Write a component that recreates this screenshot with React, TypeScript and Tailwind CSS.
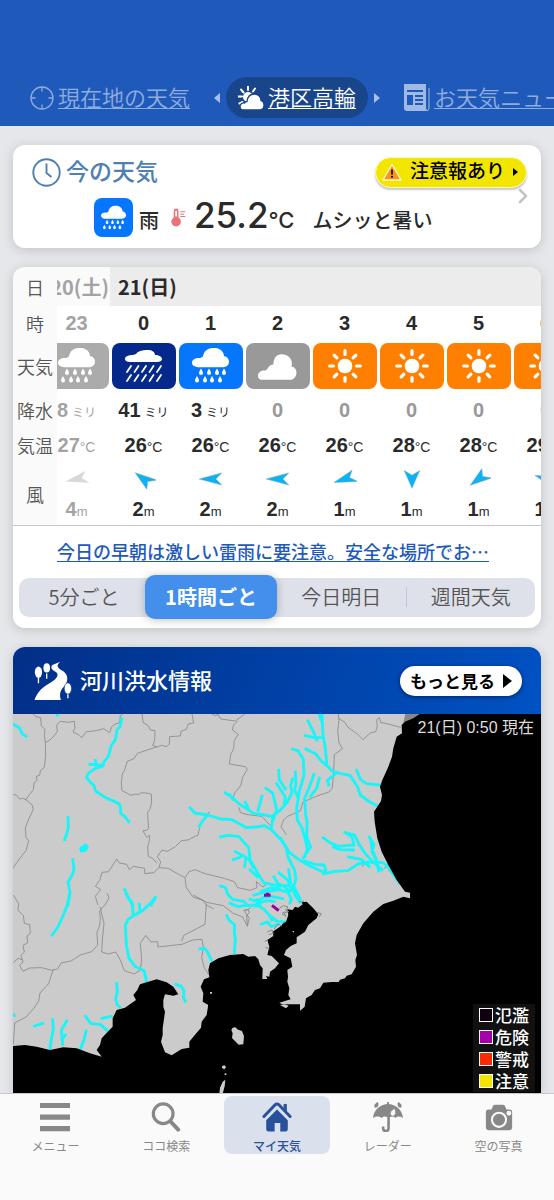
import React from "react";
import { ChevronRight } from "lucide-react";

type Sky = "rain" | "storm" | "cloud" | "sun";

interface Hour {
  time: string;
  sky: Sky;
  rain: number;
  temp: number;
  angle: number;
  wind: number;
  past?: boolean;
}

const hours: Hour[] = [
  { time: "23", sky: "rain", rain: 8, temp: 27, angle: 75, wind: 4, past: true },
  { time: "0", sky: "storm", rain: 41, temp: 26, angle: 132, wind: 2 },
  { time: "1", sky: "rain", rain: 3, temp: 26, angle: 90, wind: 2 },
  { time: "2", sky: "cloud", rain: 0, temp: 26, angle: 90, wind: 2 },
  { time: "3", sky: "sun", rain: 0, temp: 26, angle: 68, wind: 1 },
  { time: "4", sky: "sun", rain: 0, temp: 28, angle: 0, wind: 1 },
  { time: "5", sky: "sun", rain: 0, temp: 28, angle: 48, wind: 1 },
  { time: "6", sky: "sun", rain: 0, temp: 29, angle: 112, wind: 1 },
];

const CLOUD = "M8 22C3 22 0 20 0 17c0-3 3-5 7-5 2 0 3-1 4-2C12 4 16 1 22 1c6 0 10 4 10 9 3 0 5 3 5 6 0 4-3 6-7 6Z";
const DROP = "M0 0c1 2 2 3 2 4.500a2 2 0 0 1-4 0C-2 3-1 2 0 0Z";

function Rain({ className }: { className: string }) {
  return (
    <svg viewBox="0 -2 37 36" className={className} fill="#fff" aria-hidden="true">
      <path transform="translate(0 -3) scale(1 .92)" d={CLOUD} />
      {[9, 17, 25, 32].map((x) => (
        <path key={x} transform={`translate(${x} 18.500)`} d={DROP} />
      ))}
      {[5, 13, 20, 28].map((x) => (
        <path key={x} transform={`translate(${x} 26)`} d={DROP} />
      ))}
    </svg>
  );
}

function SkyIcon({ sky }: { sky: Sky }) {
  if (sky === "rain") return <Rain className="h-[36px] w-[37px]" />;
  if (sky === "storm")
    return (
      <svg viewBox="0 0 38 36" className="h-[36px] w-[38px]" fill="#fff" aria-hidden="true">
        <path d="M5 14c-3 0-5-1-5-3 0-3 4-4 8-4 1 0 2-1 3-1 2-3 6-4 12-4 4 0 7 2 7 5 4 0 7 2 7 4 0 2-2 3-5 3Z" />
        <path
          d="M6 18l-4 6M13.500 18l-4 6M21 18l-4 6M28.500 18l-4 6M36 18l-4 6M6 27l-4 6M13.500 27l-4 6M21 27l-4 6M28.500 27l-4 6M36 27l-4 6"
          stroke="#fff"
          strokeWidth="1.800"
          strokeLinecap="round"
        />
      </svg>
    );
  if (sky === "cloud")
    return (
      <svg viewBox="0 0 38 26" className="h-[27px] w-[39px]" fill="#fff" aria-hidden="true">
        <path d="M4 26c-3 0-4-2-4-4 0-3 3-5 6-5 2 0 3-1 4-3 1-2 3-3 5-3C15 5 18 1 23 1c6 0 10 4 10 9 0 1 0 2-.5 3 3 0 5 3 5 6 0 4-3 7-7 7Z" />
      </svg>
    );
  return (
    <svg viewBox="-18 -18 36 36" className="size-[36px]" aria-hidden="true">
      <circle r="7.300" fill="#fff" />
      {[0, 45, 90, 135, 180, 225, 270, 315].map((a) => (
        <path key={a} d="M0 -11.500V-15.300" transform={`rotate(${a})`} stroke="#fff" strokeWidth="3.200" strokeLinecap="round" />
      ))}
    </svg>
  );
}

function tileColor(h: Hour) {
  if (h.past) return "bg-[#ababab]";
  return {
    rain: "bg-[#0677fd]",
    storm: "bg-[#05298a]",
    cloud: "bg-[#999999]",
    sun: "bg-[#ff8000]",
  }[h.sky];
}

function WindArrow({ angle, past }: { angle: number; past?: boolean }) {
  return (
    <svg viewBox="-12 -12 24 24" className="size-[24px]" aria-hidden="true">
      <path
        transform={`scale(1.080 .850) rotate(${angle})`}
        d="M0 11L-7.200-10L0-4.500L7.200-10Z"
        fill={past ? "#d8d8d8" : "#0cb2f2"}
        stroke={past ? "none" : "#7aa7bd"}
        strokeWidth=".5"
      />
    </svg>
  );
}

const rowLabel =
  "relative z-10 bg-[#fafafa] text-[18px] leading-6 font-[350] text-[#555] shadow-[3px_0_3px_-1px_rgba(0,0,0,0.18)]";

function HourCell({ index, children }: { index: number; children: React.ReactNode }) {
  return (
    <td className="overflow-hidden p-0">
      <div className={index === 0 ? "-ml-[14px] flex w-[67px] flex-col items-center" : "flex w-[67px] flex-col items-center"}>
        {children}
      </div>
    </td>
  );
}

const num = "font-['Liberation_Sans'] text-[20px] font-bold leading-6";

function Forecast() {
  const tone = (h: Hour) => (h.past ? "text-[#a3a3a3]" : "text-[#2a2a2a]");
  return (
    <div className="overflow-hidden rounded-t-xl border-b border-[#c8c8cc]">
      <table className="w-[566px] table-fixed border-collapse">
        <colgroup>
          <col className="w-[44px]" />
          <col className="w-[53px]" />
          {hours.slice(1).map((h) => (
            <col key={h.time} className="w-[67px]" />
          ))}
        </colgroup>
        <tbody>
          <tr className="h-[39px]">
            <th scope="row" className={rowLabel}>日</th>
            <td className="overflow-hidden bg-[#fafafa] p-0">
              <div className="-ml-[14px] flex w-[66px] justify-end whitespace-nowrap text-[20px] font-bold text-[#a3a3a3]">20(土)</div>
            </td>
            <td colSpan={7} className="bg-[#ececec] p-0 pl-2 text-[20px] font-bold text-[#2a2a2a]">21(日)</td>
          </tr>
          <tr className="h-[34px]">
            <th scope="row" className={rowLabel}>時</th>
            {hours.map((h, i) => (
              <HourCell key={h.time} index={i}>
                <span className={`${num} ${tone(h)}`}>{h.time}</span>
              </HourCell>
            ))}
          </tr>
          <tr className="h-[52px]">
            <th scope="row" className={rowLabel}>天気</th>
            {hours.map((h, i) => (
              <HourCell key={h.time} index={i}>
                <div className={`flex h-[46px] w-[64px] items-center justify-center rounded-lg ${tileColor(h)}`}>
                  <SkyIcon sky={h.sky} />
                </div>
              </HourCell>
            ))}
          </tr>
          <tr className="h-[35px]">
            <th scope="row" className={rowLabel}>降水</th>
            {hours.map((h, i) => (
              <HourCell key={h.time} index={i}>
                {h.rain > 0 ? (
                  <span className={`flex items-baseline gap-1 whitespace-nowrap ${tone(h)}`}>
                    <span className={num}>{h.rain}</span>
                    <span className="text-[12px] font-normal leading-4">ミリ</span>
                  </span>
                ) : (
                  <span className={`${num} text-[#999]`}>0</span>
                )}
              </HourCell>
            ))}
          </tr>
          <tr className="h-[36px]">
            <th scope="row" className={rowLabel}>気温</th>
            {hours.map((h, i) => (
              <HourCell key={h.time} index={i}>
                <span className={`flex items-baseline ${tone(h)}`}>
                  <span className={num}>{h.temp}</span>
                  <span className="font-['Liberation_Sans'] text-[14px] leading-4">°C</span>
                </span>
              </HourCell>
            ))}
          </tr>
          <tr className="h-[62px]">
            <th scope="row" className={rowLabel}>風</th>
            {hours.map((h, i) => (
              <HourCell key={h.time} index={i}>
                <WindArrow angle={h.angle} past={h.past} />
                <span className={`mt-1.5 flex items-baseline ${tone(h)}`}>
                  <span className={num}>{h.wind}</span>
                  <span className="font-['Liberation_Sans'] text-[13px] leading-4">m</span>
                </span>
              </HourCell>
            ))}
          </tr>
        </tbody>
      </table>
    </div>
  );
}

function FloodMap() {
  return (
    <svg viewBox="13 714 528 379" className="block w-full bg-[#cbcbcb]" role="img" aria-label="河川洪水情報の地図">
      {/* Prefecture borders */}
      <g fill="none" stroke="#8b8b8b" strokeWidth="2.600" strokeLinejoin="round">
        <g transform="translate(0 705) scale(.33333)">
          <path d="M100 27l8 8 14 3 2 25 11 10-2 20 3 18 1 40-4 36-12 10-2 14-10 3 2 12-9 8-2 20-14 18-8 12-10-4-10 2-8-11-10-3" />
          <path d="M136 113l14-8 12-12 10-14-2-18 10-12 25 3 18-3 2 20-6 12 16 8 10 9 14-18 30-3 22-6 18 12 6-18 10-8 14-3 2-22 8-6" />
          <path d="M426 27l4 26 16 10 5 12 14 2-1 30-6 14 14 5 12-5 16 4 8-8 1-22 32-2 2-14 16-6 6-16 16-3-3-16-2-11" />
          <path d="M472 125l-30 10-30 10-10 16-20 8-8 26-7 12-3 28 2 22 16 8 10 6 16-4 6 2 10-6 22 2 8 3 1 26-6 20-6 8 1 26 2 22-5 5-12 3 12 20 8-8-2 22-4 14 2 28 14 7 12 14" />
          <path d="M472 455l14-20 16 4 24-14 18-18 20-2 30-15 6-28 28-42" />
          <path d="M472 455l10 16-5 16-15 16-28 3v-16l-34-6-12 10-8-16-22-4-8-12-24 38-20 2-6 22-14 20 16 10-16 20 8 26" />
          <path d="M477 488l28 2 20 12 30 16 12-18 18-6 30 12 58 14 30 10 10 18 38 8 20-8-2-18 20 16 16-12" />
          <path d="M555 518l4 30 20 28 30 10 10 14 22 12" />
          <path d="M636 27l10 5 8-4 8 14 44 6 28-21M713 48l-12 12-4 14 18 14-12 18-2 25-9 18-4 28 48 8 6 8-14 24-6 25-18 22-6 18M716 307l6 16 22 6 18 2 24 3 14 16 12 12" />
          <path d="M76 283l20 16 4 14-16 34-8 22 2 28 8 10-8 30-20 25-20 28" />
          <path d="M1015 25l2 22-4 30 4 36 10 18-24 18-2 50-4 50-10 12-36 12-42 18-8 26-40 18-10 10-8 20 16 24" />
          <path d="M1015 40l20 12 8 14 30 22 16 16 22-20 16-4 5-18-2-18 8-6 4 14 22 5 38 10" />
        </g>
        <g transform="translate(0 895) scale(.33333)">
          <path d="M40 0l16 26-2 20 16 15 3 24 16 4 2 26-10 8 2 20-14 8 4 20-10 10 6 20-10 10 10 18 20-10 36-1 30 8 18-4 10-18 30-6 28-18 34-10 18-20-2-38 8-22 2-18-2-24 20-24 8-16-6-14" />
          <path d="M40 203l14-13 12 4M160 222l-14 44-26 28-4 24-16 24-22 24-34 18-4 65M300 35l12 50-5 50-2 36 20 6 22-6 14 24 12 32 30 10 18-12 4-30-4-50 16-24 16 20 20-1 1 16 72-8 32-13 28-2 4 24-5 30 8 32 12 18 28 2" />
          <path d="M545 139l6-18 26-13 38-20 4-62M580 0l40 22 50 10 28 22 30 12 14 28 6-24-14-20 18-12" />
        </g>
        <g transform="translate(180 705) scale(.33333)">
          <path d="M545 486l14-14 6 12M612 490l18-10M622 475l6 25" />
        </g>
      </g>

      {/* Rivers */}
      <g fill="none" stroke="#18f5f8" strokeWidth="8.500" strokeLinecap="square" strokeLinejoin="round">
        <g transform="translate(0 705) scale(.33333)">
          <path d="M40 58l18 10 10 20 10 6M365 42l-4 22-10 10-4 28-14 22-8 30-12 15-6 15-18 5-22 14-8 14 12 15 10 8 6 18 30 20 40 18 5 12v18l12 8 12 16M270 178l40 2M286 166l4 20M204 338l1 28-6 24-5 14M218 464l4 24-4 20-14 24 6 30-6 38" />
          <path d="M242 430l14-10 6 6-6 10-12 2Z" fill="#18f5f8" />
          <path d="M374 554l10 22 14 24M466 578l-12 22M172 28v2" />
        </g>
        <g transform="translate(0 895) scale(.33333)">
          <path d="M208 0l-6 30-12 30-16 36-18 24M380 0l16 24 4 38-16 12-8 16 3 60 8 40 18 24 28 14 6 30M466 8l-18 20-22 20-22 12M418 28l2 20" />
          <path d="M350 266l2 24-5 20 4 18 8 8M158 374l2 28-5 26-5 32M200 378l-16 28 4 42M196 420l-10 14M258 408l-6 26-10 26M104 393l24-8M257 364l16 22 28 2 22 20M306 370l28-6M528 268l16 6 8 14-2 20 6 10M42 360v2" />
          <path d="M680 62l8 14 16 14-1 22 3 20-3 40M600 162l14-2 8 10 12 26" />
        </g>
        <g transform="translate(180 705) scale(.33333)">
          <path d="M30 308l14 16 38 6 40 12 34 2 44 24 30-2 24-4 22 14 30 32 22 34 26 20 30 18 54 25 26-6 40-2 30-20 36-6 40 2 22 24 26 36 34 18M82 330l-16 20-8 14M136 264l20 12 20 20 26 16 20 14 32 4 20 4 26-18 20-22 16-30-4-22 6-20M150 270l8 12M196 292l8 16M296 196l2 28 18 28M290 236l26 40-4 26M258 250l20 14 12 50-10 30M246 274l-12 42M278 340l-4 30" />
          <path d="M338 132l16 5 16 26 2 48-14 48-8 50 2 36 14 24 10 35 6 26-8 24M346 202l2 34-4 18 8 20M402 208l-14 38-14 34 3 50 4 20-1 46 12 30-10 14-12 18M418 220l-8 30-18 24" />
          <path d="M426 30l3 62 6 30 6 60 18 18 24 6 28 6 22 34 8 24 24 18 26 14M419 30l6 20M384 48l18 36 8 20M376 92l28 6 22-1M378 132l28 14 16 20 28 24M470 204l-28 22 4 14M530 196l12 28 18 12 38 4" />
          <path d="M430 398l18 14 26 12 48-4-6-24-22-14 30 8 12 26 20 30 20 22 30 26M460 426l20 8 40 1M506 456l38 8 24 20M568 396l14 24-6 20 14 28 6 30M572 402l4 30 16 40" />
          <path d="M122 396l20-5 34 3 30 34 4 36 12 20 12 22 18 28 40 8 38 0M166 440l24 12 18 12 12 24M160 464l22-8M194 484l4-24M210 495l22 20M374 468l32 10 26 2 6 16-8 10" />
          <path d="M302 400l16 26 6 30 20 40 4 26-10 30 8 20 14 20M282 516l12 20 18 8 16 16M298 504l26 22 10 30M326 494l6 40" />
        </g>
        <g transform="translate(180 860) scale(.33333)">
          <path d="M122 78l14 4 8 22 14 14 34 6 10 12 30-2M150 130l24 10 22-4 40 2 16 10 14 16 26 20 22 2M222 105l46-12 30-4 26 8 10 20-4 12M210 118l22 6 20-12 26-2 30 6M232 130l30-8 20 2M244 192l18-6 12 14 18-6M268 166l8 14M232 120l10 20M340 76l10 20 10 20" />
          <path d="M244 94l28-10 26 2" />
        </g>
      </g>

      {/* Stretches at danger level */}
      <g transform="translate(180 860) scale(.33333)" fill="none" stroke="#99009c" strokeWidth="9">
        <path d="M252 106h20M258 103h10M276 136l20 16" />
      </g>

      {/* Sea */}
      <g fill="#000">
        <g transform="translate(180 860) scale(.33333)">
          <path d="M676-440H730L700-418L668-400Z" fill="#888" />
          <path d="M722-440L700-425 675-415 665-405 666-380 650-370 640-335 636-310 625-280 607-240 600-220 606-195 603-177 592-160 582-145 584-115 592-65 605-25 625 15 650 60 675 95 690 98 690 115 670 110 640 122 610 132 580 155 550 190 530 225 525 250 531 285 526 300 528 320 515 343 500 347 495 355 480 359 476 366 455 366 430 368 420 385 405 390 395 405 378 415 374 440 355 457 325 457 320 440 298 428 315 423 332 418 325 405 328 385 322 365 324 350 322 330 337 320 332 295 312 285 318 270 332 258 350 250 350 232 375 215 385 195 410 175 415 163 400 145 380 125 365 127 368 133 355 143 345 140 338 150 322 148 325 165 318 185 310 190 300 200 278 215 280 228 262 240 268 260 262 285 275 288 285 298 297 310 285 325 270 335 268 350 258 348 262 357 247 357 248 325 240 315 235 298 225 288 205 290 190 282 150 285 115 295 90 310 85 330 88 352 72 358 62 380 70 400 68 425 85 435 85 740 1110 740 1110-440Z" />
        </g>
        <g transform="translate(0 895) scale(.33333)">
          <path d="M625 328L620 360 605 380 603 398 580 425 568 440 568 458 545 462 515 481 495 472 483 440 488 420 488 400 495 350 490 335 490 315 495 298 520 302 535 298 520 275 500 262 470 253 445 260 420 268 412 285 400 300 408 315 375 338 350 345 338 370 338 395 322 412 305 430 300 450 290 465 305 485 270 475 230 460 190 457 150 465 110 455 75 450 38 453 38 600 900 600 900 328Z" />
        </g>
      </g>

      {/* Islands and harbour piers */}
      <g fill="#cbcbcb" transform="translate(180 860) scale(.33333)">
        <path d="M158 503l8-1 8 7 12 4 6 16-2 24-14 1-20-20 2-14-4-10ZM126 618l8-2 4 6-5 6-7-4ZM134 640h5v5h-5ZM128 665l8-6-2 20-6 22h-10l2-18ZM90 396h6v5h-6ZM338 213h4v4h-4ZM300 435l14-2 12 4-8 8Z" />
        <g fill="none" stroke="#8b8b8b" strokeWidth="3">
          <path d="M298 145l12-8 14 4-8 10 10 4-14 4 6 10-12-8 8-6M282 208l12-16 12 6M262 216l14-6 4 10-14 4M254 244l10-4M256 262l12 4M410 157l14 4-6 10M358 125l14-2M190 152l14-4 4 10-8 8 2 30" />
        </g>
      </g>
    </svg>
  );
}

const legend = [
  { name: "氾濫", color: "bg-[#10000f]" },
  { name: "危険", color: "bg-[#a800a8]" },
  { name: "警戒", color: "bg-[#ff2a00]" },
  { name: "注意", color: "bg-[#f2e600]" },
];

const card = "rounded-xl bg-white shadow-[0_2px_12px_rgba(0,0,0,0.16)]";
const headerText = "pb-1 leading-6 underline decoration-1 underline-offset-2";

export default function App() {
  return (
    <div className="flex min-h-screen flex-col bg-[#e6e7eb] font-['Noto_Sans_CJK_JP',sans-serif] text-[#2a2a2a]">
      <header className="overflow-hidden bg-[#1f5abb] pt-[77px] pb-2">
        <nav className="flex items-center whitespace-nowrap pl-[30px] text-[22px] font-[350] text-[#8facdd]">
          <a href="#here" className="flex shrink-0 items-center gap-1">
            <svg viewBox="0 0 24 24" className="size-6" fill="none" stroke="currentColor" strokeWidth="1.300" aria-hidden="true">
              <circle cx="12" cy="12" r="11" />
              <path d="M12 1v4.500M12 18.500V23M1 12h4.500M18.500 12H23" />
            </svg>
            <span className={headerText}>現在地の天気</span>
          </a>
          <svg viewBox="0 0 6 10" className="mr-1.5 ml-6 h-[10px] w-[6px] shrink-0" fill="#a9c0e6" aria-hidden="true">
            <path d="M6 0v10L0 5Z" />
          </svg>
          <a href="#minato" className="flex h-[41px] shrink-0 items-center gap-1 rounded-full bg-[#19458b] px-3 text-white">
            <svg viewBox="0 0 26 24" className="h-6 w-[26px]" aria-hidden="true">
              <path d="M10 0v4M3 3.500l2.500 3M17 2.500l-2 3M0 10.500h4M1.500 17.500l3-1.500" stroke="#fff" strokeWidth="2" strokeLinecap="round" />
              <circle cx="10" cy="11" r="5" fill="#fff" />
              <path
                d="M6 24c-2.500 0-4-1.500-4-3.500s2-4 4.500-3.500c.5-1 1.500-1.500 2.500-1.500C9.500 11 12 8 16.500 8c4 0 6.500 3 6.500 6.500 2 .5 3 2.500 3 4.500 0 3-2 5-4.500 5Z"
                fill="#fff"
                stroke="#19458b"
                strokeWidth="1.300"
              />
            </svg>
            <span className={headerText}>港区高輪</span>
          </a>
          <svg viewBox="0 0 6 10" className="mr-6 ml-1.5 h-[10px] w-[6px] shrink-0" fill="#a9c0e6" aria-hidden="true">
            <path d="M0 0v10l6-5Z" />
          </svg>
          <a href="#news" className="flex shrink-0 items-center gap-1">
            <svg viewBox="0 0 26 27" className="h-[27px] w-[26px]" fill="#a2bae3" aria-hidden="true">
              <path fillRule="evenodd" d="M0 0h22v24l1 3H3q-3 0-3-3ZM3 6v2h16V6ZM3 11v10h6V11ZM11 11v2h8v-2ZM11 15v2h8v-2ZM11 19v2h8v-2Z" />
              <path d="M25 4v20q0 3-3 3" fill="none" stroke="#a2bae3" />
            </svg>
            <span className={headerText}>お天気ニュース</span>
          </a>
        </nav>
      </header>

      <main className="flex grow flex-col gap-[19px] px-[13px] pt-[19px]">
        <section className={`relative h-[103px] ${card}`}>
          <div className="flex items-center justify-between pt-[9px] pr-[14px] pl-[19px]">
            <h2 className="flex items-center gap-[5px] text-[23px] font-medium leading-8 text-[#4f7fb3]">
              <svg viewBox="0 0 29 29" className="size-[29px]" fill="none" stroke="currentColor" strokeWidth="1.900" aria-hidden="true">
                <circle cx="14.500" cy="14.500" r="13.200" />
                <path d="M14.500 5.500v9.500l5 4" />
              </svg>
              <span className="pb-1">今の天気</span>
            </h2>
            <a
              href="#warning"
              className="flex h-[31px] items-center gap-2 rounded-full border border-[#fff9c0] bg-[#f2e600] px-1.5 text-[19px] font-medium text-black shadow-[0_2px_2px_rgba(0,0,0,0.22)]"
            >
              <svg viewBox="0 0 20 18" className="h-[18px] w-[20px]" aria-hidden="true">
                <path d="M10 1.500L19 17H1Z" fill="#ff9410" stroke="#fff8d5" strokeWidth="1.300" strokeLinejoin="round" />
                <path d="M10 6.500v5" stroke="#111" strokeWidth="1.800" />
                <circle cx="10" cy="13.800" r="1.100" />
              </svg>
              <span className="pb-1 leading-6">注意報あり</span>
              <svg viewBox="0 0 5 8" className="mr-0.5 h-[8px] w-[5px]" aria-hidden="true">
                <path d="M0 0v8l5-4Z" />
              </svg>
            </a>
          </div>
          <ChevronRight className="absolute top-[39px] right-1.5 size-6 text-[#c4c4c6]" strokeWidth={2.5} aria-hidden="true" />
          <div className="flex items-center pt-[5px] pl-[81px] leading-10">
            <span className="flex size-[39px] items-center justify-center rounded-lg bg-[#0677fd]">
              <Rain className="h-[28px] w-[25px]" />
            </span>
            <span className="ml-1.5 pt-1 text-[20px] font-medium">雨</span>
            <svg viewBox="0 0 15 21" className="ml-3 h-[20px] w-[15px]" aria-hidden="true">
              <path d="M2.500 10V3a2.500 2.500 0 0 1 5 0v7a5 5 0 1 1-5 0Z" fill="#ea7178" />
              <path d="M5 3v6" stroke="#fff" strokeWidth="1.800" />
              <path d="M9.500 4h5M9.500 6.500h4M9.500 9h5" stroke="#ea7178" strokeWidth="1.100" />
            </svg>
            <span className="ml-2 flex items-baseline font-['Inter']">
              <span className="text-[35px] font-medium">25.2</span>
              <span className="text-[22px] font-medium">°C</span>
            </span>
            <span className="ml-[18px] pt-1 text-[20px] font-medium">ムシッと暑い</span>
          </div>
        </section>

        <section className={card}>
          <Forecast />
          <p className="pt-[11px] text-center text-[18px] font-medium leading-7">
            <a href="#topic" className="mr-2 text-[#1f5abb] underline decoration-1 underline-offset-2">
              今日の早朝は激しい雷雨に要注意。安全な場所でお…
            </a>
          </p>
          <div role="tablist" className="px-1.5 pt-2.5 pb-[9px]">
            <div className="flex h-[44px] items-center">
              <div className="flex h-[39px] w-full items-center rounded-[10px] bg-[#dfe1ea] text-[20px] font-[350] text-[#555]">
                <button role="tab" aria-selected="false" className="h-full w-[126px] pl-1">5分ごと</button>
                <button role="tab" aria-selected="true" className="h-[44px] w-[132px] rounded-[10px] bg-[#438feb] font-bold text-white shadow-[0_1px_8px_rgba(0,0,0,0.25)]">
                  1時間ごと
                </button>
                <button role="tab" aria-selected="false" className="h-full flex-1">今日明日</button>
                <span className="h-5 w-px bg-[#c3c6d0]" />
                <button role="tab" aria-selected="false" className="h-full flex-1">週間天気</button>
              </div>
            </div>
          </div>
        </section>

        <section className="rounded-t-xl shadow-[0_2px_12px_rgba(0,0,0,0.16)]">
          <div className="flex h-[67px] items-center justify-between rounded-t-xl bg-[linear-gradient(110deg,#022f87,#0052c4)] pr-[19px] pl-[21px]">
            <h2 className="flex items-center gap-2 text-[22px] font-medium text-white">
              <svg viewBox="0 0 112 118" className="h-[39px] w-[38px]" fill="#fff" aria-hidden="true">
                <path d="M0 118C10 90 28 78 48 66C64 56 76 44 66 34C56 28 46 22 54 12L78 2C66 12 68 20 82 28C100 38 104 54 94 72C78 88 74 100 80 118Z" />
                <ellipse cx="12" cy="34" rx="11" ry="17" />
                <path d="M10 45h4v22h-4ZM35 38h4v16h-4ZM99 95h4v18h-4Z" />
                <ellipse cx="37" cy="21" rx="10" ry="14" />
                <ellipse cx="101" cy="83" rx="11" ry="17" stroke="#033694" strokeWidth="2" />
              </svg>
              <span className="pb-0.5">河川洪水情報</span>
            </h2>
            <a href="#flood" className="flex h-[30px] items-center gap-2 rounded-full bg-white px-2.5 text-[17px] font-bold text-black shadow-[0_1px_4px_rgba(0,0,0,0.5)]">
              もっと見る
              <svg viewBox="0 0 9 14" className="h-[14px] w-[9px]" aria-hidden="true">
                <path d="M0 0v14l9-7Z" />
              </svg>
            </a>
          </div>
          <div className="relative">
            <FloodMap />
            <time className="absolute top-0.5 right-[7px] font-['Liberation_Sans','Noto_Sans_CJK_JP',sans-serif] text-[16px] leading-6 text-[#ddd]">
              21(日) 0:50 現在
            </time>
            <ul className="absolute right-1.5 bottom-px bg-[#111] px-1.5 text-[17px] font-medium leading-[22px] text-white">
              {legend.map((l) => (
                <li key={l.name} className="flex items-center gap-0.5">
                  <span className={`size-[14px] border border-white ${l.color}`} />
                  {l.name}
                </li>
              ))}
            </ul>
          </div>
        </section>
      </main>

      <nav className="sticky bottom-0 z-20 grid h-[107px] grid-cols-5 items-start border-t border-[#c9c9cc] bg-[#fafafa] pt-0.5 text-[12px] text-[#888]">
        <a href="#menu" className="mx-0.5 flex h-[58px] flex-col items-center pt-1.5">
          <svg viewBox="0 0 32 32" className="size-8" fill="currentColor" aria-hidden="true">
            <path d="M0 1h32v5.500H0ZM0 13.300h32v5.500H0ZM0 25.700h32v5.500H0Z" />
          </svg>
          <span className="mt-1.5 leading-4">メニュー</span>
        </a>
        <a href="#search" className="mx-0.5 flex h-[58px] flex-col items-center pt-1.5">
          <svg viewBox="0 0 32 32" className="size-8" fill="none" stroke="currentColor" aria-hidden="true">
            <circle cx="13" cy="12.500" r="10.500" strokeWidth="3.400" />
            <path d="M20.500 20.500l8.500 9" strokeWidth="4.200" strokeLinecap="round" />
          </svg>
          <span className="mt-1.5 leading-4">ココ検索</span>
        </a>
        <a href="#home" aria-current="page" className="mx-0.5 flex h-[58px] flex-col items-center rounded-lg bg-[#dae0ec] pt-1.5 font-medium text-[#27529b]">
          <svg viewBox="0 0 32 32" className="size-8" aria-hidden="true">
            <path d="M2 15.500L14 3q2-2 4 0l12 12.500" fill="none" stroke="currentColor" strokeWidth="3.200" strokeLinecap="round" />
            <path d="M23 2.500q1.700-1.500 3.500 0V10L23 6.500Z" fill="currentColor" />
            <path d="M4.500 19.500L16 8l11.500 11.500V29q0 2.500-2.500 2.500H19.500v-9h-6v9H7Q4.500 31.500 4.500 29Z" fill="currentColor" />
          </svg>
          <span className="mt-1.5 leading-4">マイ天気</span>
        </a>
        <a href="#radar" className="mx-0.5 flex h-[58px] flex-col items-center pt-1.5">
          <svg viewBox="0 0 32 32" className="size-8" fill="currentColor" aria-hidden="true">
            <path d="M0 17C1 8 7 3 15 2V0h2v2c8 1 14 6 15 15-3-2-6-2-8 0-2-2-4-2-6-1v12a4.300 4.300 0 0 1-8.600 0V26h2.800v2a1.500 1.500 0 0 0 3 0V16c-2-1-4-1-6 1-3-2-6-2-9.200 0Z" />
            <path d="M5 0c2 3 0 6-2 6S0 3 5 0ZM27 0c-2 3 0 6 2 6s3-3-2-6Z" />
            <path d="M23 7c2 4 1 8-2 8s-4-5 2-8Z" fill="#fafafa" stroke="#888" strokeWidth=".5" />
          </svg>
          <span className="mt-1.5 leading-4">レーダー</span>
        </a>
        <a href="#photos" className="mx-0.5 flex h-[58px] flex-col items-center pt-1.5">
          <svg viewBox="0 0 32 32" className="size-8" fill="currentColor" aria-hidden="true">
            <path d="M5 8h3l1.500-3.500Q10 3 12 3h8q2 0 2.500 1.500L24 8h3q3 0 3 3v16q0 3-3 3H5q-3 0-3-3V11q0-3 3-3Z" />
            <circle cx="16" cy="19" r="7.500" stroke="#fafafa" strokeWidth="2.200" />
            <circle cx="26.500" cy="12" r="2.600" fill="#fafafa" />
          </svg>
          <span className="mt-1.5 leading-4">空の写真</span>
        </a>
      </nav>
    </div>
  );
}
